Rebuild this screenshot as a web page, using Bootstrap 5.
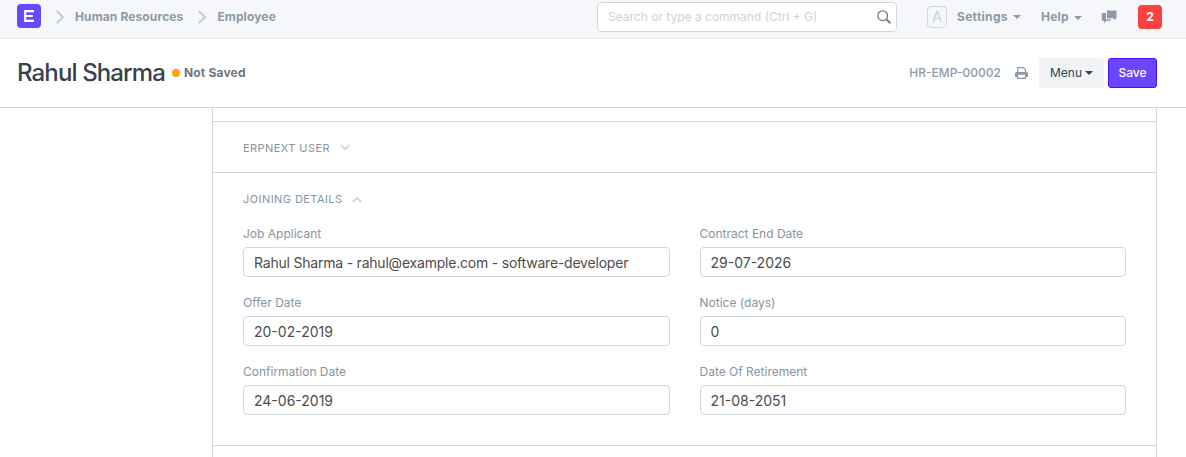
<!DOCTYPE html>
<html lang="en">
<head>
<meta charset="utf-8">
<title>Rahul Sharma</title>
<meta name="viewport" content="width=device-width, initial-scale=1">
<link href="https://cdn.jsdelivr.net/npm/bootstrap@5.3.0/dist/css/bootstrap.min.css" rel="stylesheet">
<style>
body{font-family:Inter,sans-serif;font-size:12px;line-height:18px;color:#36414c;background:#fff;height:457px;overflow:hidden}
svg{display:block;flex:none}
.topbar{height:39px;background:#f5f7fa;border-bottom:1px solid #e4eaef;padding:0 24px 5px 17px;color:#8d99a6;font-weight:700}
.topbar a{color:#8d99a6;text-decoration:none;letter-spacing:.12px}
.topbar .menu-link{letter-spacing:.3px;width:64px;margin-right:20px}
.topbar .help-link{width:41px;letter-spacing:.2px}
.help-link .tri{margin-top:2px}
.logo{width:24px;height:24px;margin-top:-2px}
.sep{margin:1px 10px 0 15px}
.search{width:300px;height:30px;background:#fff;border:1px solid #d1d8dd;border-radius:4px;padding:0 5px 0 10px;color:#cbd3d9;font-weight:400;margin-right:30px}
.avatar-box{width:20px;height:22px;border:1px solid #d1d8dd;border-radius:4px;color:#cbd3d9;font-weight:400;font-size:14px;line-height:20px;margin-right:10px}
.tri{width:0;height:0;border:4px solid transparent;border-top-color:currentColor;border-bottom:0}
.count{width:24px;height:24px;background:#ff4041;color:#fff;border-radius:4px}
.pagehead{height:69px;border-bottom:1px solid #d1d8dd;padding:0 29px 0 17px}
.title{font-size:24px;line-height:30px;font-weight:500;letter-spacing:-.87px;margin:0 7px 0 0;width:148px;white-space:nowrap}
.dot{width:8px;height:8px;border-radius:50%;background:#ffa00a;margin-right:4px}
.state{font-weight:700;color:#6c7680;letter-spacing:.18px}
.docname{color:#8d99a6;font-weight:500}
.act{height:30px;border-radius:3px;font-size:12px;line-height:18px;padding:0 10px;font-weight:400}
.act-menu,.act-menu:hover{background:#f0f4f7;color:#36414c;border:0;width:65px;margin-right:4px}
.act-save,.act-save:hover{background:#6b46ff;color:#fff;border:1px solid #4d0dff;width:49px;font-weight:500;padding:0}
.sheet{width:945px;height:349px;margin-left:212px;border:solid #d1d8dd;border-width:0 1px}
.stub{height:13px}
.sect{border-top:1px solid #d1d8dd;padding:0 30px}
.sect-head{font-size:11px;line-height:16px;text-transform:uppercase;letter-spacing:.43px;color:#8694a3;height:51px;padding-top:1px}
.sect-head svg{margin-left:10px}
.fields{column-gap:29.5px;display:grid;grid-template-columns:427px 426.5px;padding-bottom:30px;margin-top:1px}
.field{height:69px}
.field:nth-last-child(-n+2){height:52px}
.field label{display:block;color:#8694a3;line-height:18px;margin-bottom:4px}
.field .form-control{height:30px;border:1px solid #d1d8dd;border-radius:4px;font-size:14px;line-height:20px;padding:5px 10px 3px;color:#4c4c4c}
.field .link-value{letter-spacing:-.21px}
</style>
</head>
<body>
<nav class="topbar d-flex align-items-center">
  <svg class="logo" viewBox="0 0 24 24"><rect width="24" height="24" rx="4" fill="#6b46ff"/><path d="M17 7.200H8.200v9.600H17M8.200 12h7.600" fill="none" stroke="#fff" stroke-width="2.200"/></svg>
  <svg class="sep" width="9" height="14" viewBox="0 0 9 14"><path d="M.8.800 7 7 .8 13.200" fill="none" stroke="#c0cad2" stroke-width="1.900"/></svg>
  <a href="#">Human Resources</a>
  <svg class="sep" width="9" height="14" viewBox="0 0 9 14"><path d="M.8.800 7 7 .8 13.200" fill="none" stroke="#c0cad2" stroke-width="1.900"/></svg>
  <a href="#">Employee</a>
  <div class="search d-flex align-items-center justify-content-between ms-auto">
    <span>Search or type a command (Ctrl + G)</span>
    <svg width="14" height="14" viewBox="0 0 14 14" fill="none" stroke="#6c7680"><circle cx="5.700" cy="5.700" r="4.900" stroke-width="1.200"/><path d="m9.400 9.400 4 3.900" stroke-width="1.900"/></svg>
  </div>
  <span class="avatar-box text-center">A</span>
  <a href="#" class="menu-link d-flex align-items-center justify-content-between">Settings<i class="tri"></i></a>
  <a href="#" class="help-link d-flex align-items-center justify-content-between">Help<i class="tri"></i></a>
  <svg style="margin:0 21px 0 19px" width="16" height="14" viewBox="0 0 16 14" fill="#8d99a6"><path d="M6 .500h9.500v7.800h-1v2.200L12.200 8.300H6z"/><path d="M.8 3H5v6.300h4.500v1.500H5.300L3 13.200v-2.400H.8z"/></svg>
  <span class="count d-flex align-items-center justify-content-center">2</span>
</nav>
<header class="pagehead d-flex align-items-center">
  <h1 class="title">Rahul Sharma</h1>
  <i class="dot"></i><span class="state">Not Saved</span>
  <span class="docname ms-auto">HR-EMP-00002</span>
  <svg style="margin:0 11px 0 14px" width="13" height="12" viewBox="0 0 13 12"><path d="M2.700 6V.700h5.800l2 2V6" fill="none" stroke="#8d99a6" stroke-width="1.200"/><path d="M1.500 5h10A1.500 1.500 0 0 1 13 6.500V10h-2V7.800H2V10H0V6.500A1.500 1.500 0 0 1 1.500 5z" fill="#8d99a6"/><path d="M2.500 8v3.400h8V8" fill="none" stroke="#8d99a6" stroke-width="1.200"/></svg>
  <button class="btn act act-menu d-flex align-items-center justify-content-center">Menu<i class="tri" style="margin-left:3px"></i></button>
  <button class="btn act act-save">Save</button>
</header>
<main class="sheet">
  <div class="stub"></div>
  <section class="sect">
    <div class="sect-head d-flex align-items-center" style="height:50px">ERPNext User<svg width="10" height="7" viewBox="0 0 10 7"><path d="m.8 1 4.200 4.200L9.200 1" fill="none" stroke="#d1d8dd" stroke-width="2"/></svg></div>
  </section>
  <section class="sect">
    <div class="sect-head d-flex align-items-center">Joining Details<svg width="10" height="7" viewBox="0 0 10 7"><path d="m.8 6L5 1.800 9.200 6" fill="none" stroke="#d1d8dd" stroke-width="2"/></svg></div>
    <div class="fields">
      <div class="field"><label>Job Applicant</label><div class="form-control link-value">Rahul Sharma - rahul@example.com - software-developer</div></div>
      <div class="field"><label>Contract End Date</label><div class="form-control">29-07-2026</div></div>
      <div class="field"><label>Offer Date</label><div class="form-control">20-02-2019</div></div>
      <div class="field"><label>Notice (days)</label><div class="form-control">0</div></div>
      <div class="field"><label>Confirmation Date</label><div class="form-control">24-06-2019</div></div>
      <div class="field"><label>Date Of Retirement</label><div class="form-control">21-08-2051</div></div>
    </div>
  </section>
  <section class="sect"></section>
</main>
<script src="https://cdn.jsdelivr.net/npm/bootstrap@5.3.0/dist/js/bootstrap.bundle.min.js"></script>
</body>
</html>
